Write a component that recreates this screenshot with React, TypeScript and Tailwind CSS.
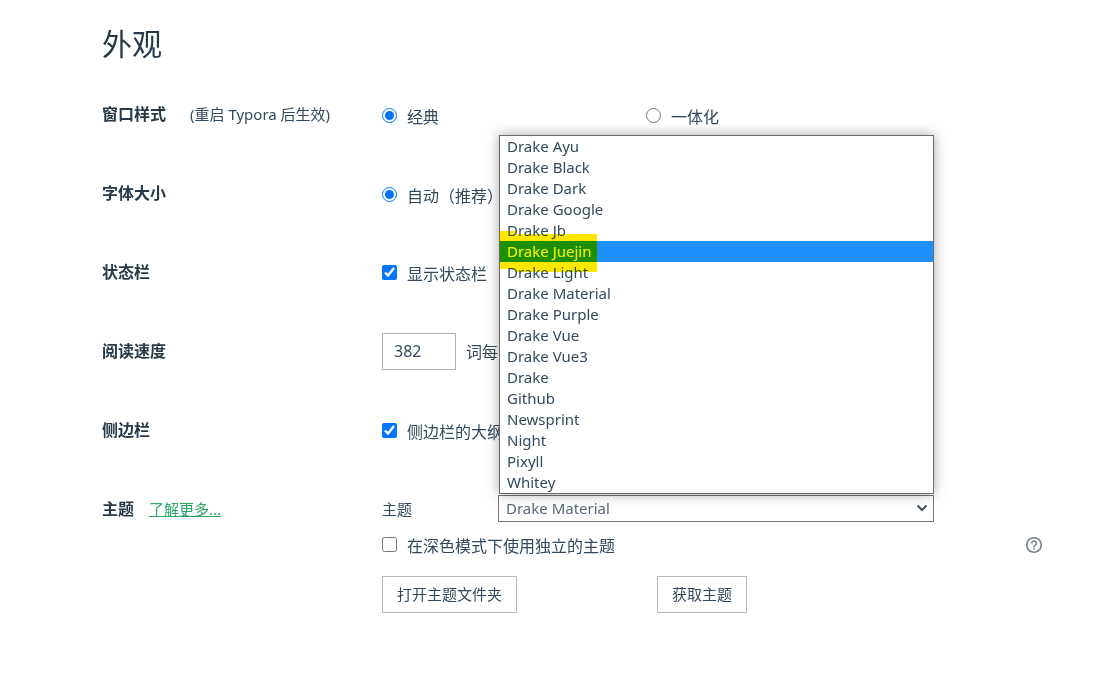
import type { ReactNode } from "react";

const themes = [
  "Drake Ayu",
  "Drake Black",
  "Drake Dark",
  "Drake Google",
  "Drake Jb",
  "Drake Juejin",
  "Drake Light",
  "Drake Material",
  "Drake Purple",
  "Drake Vue",
  "Drake Vue3",
  "Drake",
  "Github",
  "Newsprint",
  "Night",
  "Pixyll",
  "Whitey",
];

const hovered = "Drake Juejin";

function Row({ title, extra, children }: { title: string; extra?: ReactNode; children: ReactNode }) {
  return (
    <section className="grid grid-cols-[280px_1fr]">
      <div className="flex h-[37px] items-center">
        <h2 className="pb-0.5 text-base font-bold text-[#273849]">{title}</h2>
        {extra}
      </div>
      <div>{children}</div>
    </section>
  );
}

function Choice({ type, name, label, checked }: { type: "radio" | "checkbox"; name: string; label: string; checked?: boolean }) {
  return (
    <label className={`flex h-[37px] items-center gap-2.5 whitespace-nowrap ${type === "radio" ? "pt-0.5" : ""}`}>
      <input
        type={type}
        name={name}
        defaultChecked={checked}
        className="size-[15px] shrink-0 accent-[#0075ff]"
      />
      <span className="pt-0.5">{label}</span>
    </label>
  );
}

function ThemeSelect() {
  return (
    <div className="relative mr-[108px] flex-1">
      <select
        id="theme"
        defaultValue="Drake Material"
        className="block h-[27px] w-full appearance-none border border-[#767676] bg-white pb-0.5 pl-[7px] text-[15px] leading-5 text-[#5a6a7b]"
      >
        {themes.map((theme) => (
          <option key={theme}>{theme}</option>
        ))}
      </select>
      <svg className="pointer-events-none absolute right-[6px] top-[9px]" width="12" height="8" viewBox="0 0 12 8" fill="none">
        <path d="M1.500 1.500L6 6L10.500 1.500" stroke="#41505f" strokeWidth="2" />
      </svg>

      {/* Open list */}
      <ul
        role="listbox"
        aria-label="主题"
        className="absolute bottom-full left-px right-0 mb-px border border-[#6b6b6b] bg-white text-[15px] leading-[21px] shadow-[0_0_12px_rgba(0,0,0,0.35)]"
      >
        {themes.map((theme) => (
          <li
            key={theme}
            role="option"
            aria-selected={theme === hovered}
            className={theme === hovered ? "relative bg-[#1e90ff] pl-[7px] text-white" : "pl-[7px]"}
          >
            {theme}
            {theme === hovered && (
              <svg
                className="pointer-events-none absolute -top-[10px] left-0 z-10 mix-blend-darken"
                width="97"
                height="41"
                viewBox="0 0 97 41"
              >
                <path d="M0 0H16V3H97V41H16V38H0Z" fill="#ffe600" />
              </svg>
            )}
          </li>
        ))}
      </ul>
    </div>
  );
}

export default function App() {
  return (
    <main className="min-h-screen bg-white pb-10 pl-[102px] pr-[55px] pt-[22px] font-['Noto_Sans','Noto_Sans_CJK_SC',sans-serif] text-base text-[#34495e]">
      <h1 className="mb-[30px] text-[30px] leading-[44px] text-[#273849]">外观</h1>

      <div className="flex flex-col gap-[42px]">
        <Row title="窗口样式" extra={<span className="ml-6 text-[15px]">(重启 Typora 后生效)</span>}>
          <div className="grid grid-cols-[2fr_3fr]">
            <Choice type="radio" name="window-style" label="经典" checked />
            <Choice type="radio" name="window-style" label="一体化" />
          </div>
        </Row>

        <Row title="字体大小">
          <Choice type="radio" name="font-size" label="自动（推荐）" checked />
        </Row>

        <Row title="状态栏">
          <Choice type="checkbox" name="status-bar" label="显示状态栏" checked />
        </Row>

        <Row title="阅读速度">
          <label className="flex items-center gap-2.5">
            <input
              type="text"
              defaultValue="382"
              className="h-[37px] w-[74px] border border-[#b0b0b0] bg-white px-[11px] pb-0.5 text-base"
            />
            <span>词每</span>
          </label>
        </Row>

        <Row title="侧边栏">
          <Choice type="checkbox" name="outline" label="侧边栏的大纲" checked />
        </Row>

        <Row
          title="主题"
          extra={
            <a href="#themes" className="ml-[15px] text-[15px] text-[#2fa566] underline">
              了解更多...
            </a>
          }
        >
          <div className="flex h-[35px] items-center">
            <label htmlFor="theme" className="w-[116px] pt-0.5 text-[15px]">
              主题
            </label>
            <ThemeSelect />
          </div>
          <div className="flex items-center justify-between">
            <Choice type="checkbox" name="dark-theme" label="在深色模式下使用独立的主题" />
            <button type="button" aria-label="帮助">
              <svg width="16" height="16" viewBox="2 2 20 20" fill="#708090">
                <path d="M11 18h2v-2h-2v2zm1-16C6.48 2 2 6.48 2 12s4.480 10 10 10 10-4.480 10-10S17.520 2 12 2zm0 18c-4.410 0-8-3.590-8-8s3.590-8 8-8 8 3.590 8 8-3.590 8-8 8zm0-14c-2.210 0-4 1.790-4 4h2c0-1.100.9-2 2-2s2 .9 2 2c0 2-3 1.750-3 5h2c0-2.250 3-2.500 3-5 0-2.210-1.790-4-4-4z" />
              </svg>
            </button>
          </div>
          <div className="mt-[13px] grid grid-cols-[5fr_7fr] justify-items-start">
            <button type="button" className="h-[37px] border border-[#b8b8b8] bg-white px-3.5 text-[15px]">
              打开主题文件夹
            </button>
            <button type="button" className="h-[37px] border border-[#b8b8b8] bg-white px-3.5 text-[15px]">
              获取主题
            </button>
          </div>
        </Row>
      </div>
    </main>
  );
}
